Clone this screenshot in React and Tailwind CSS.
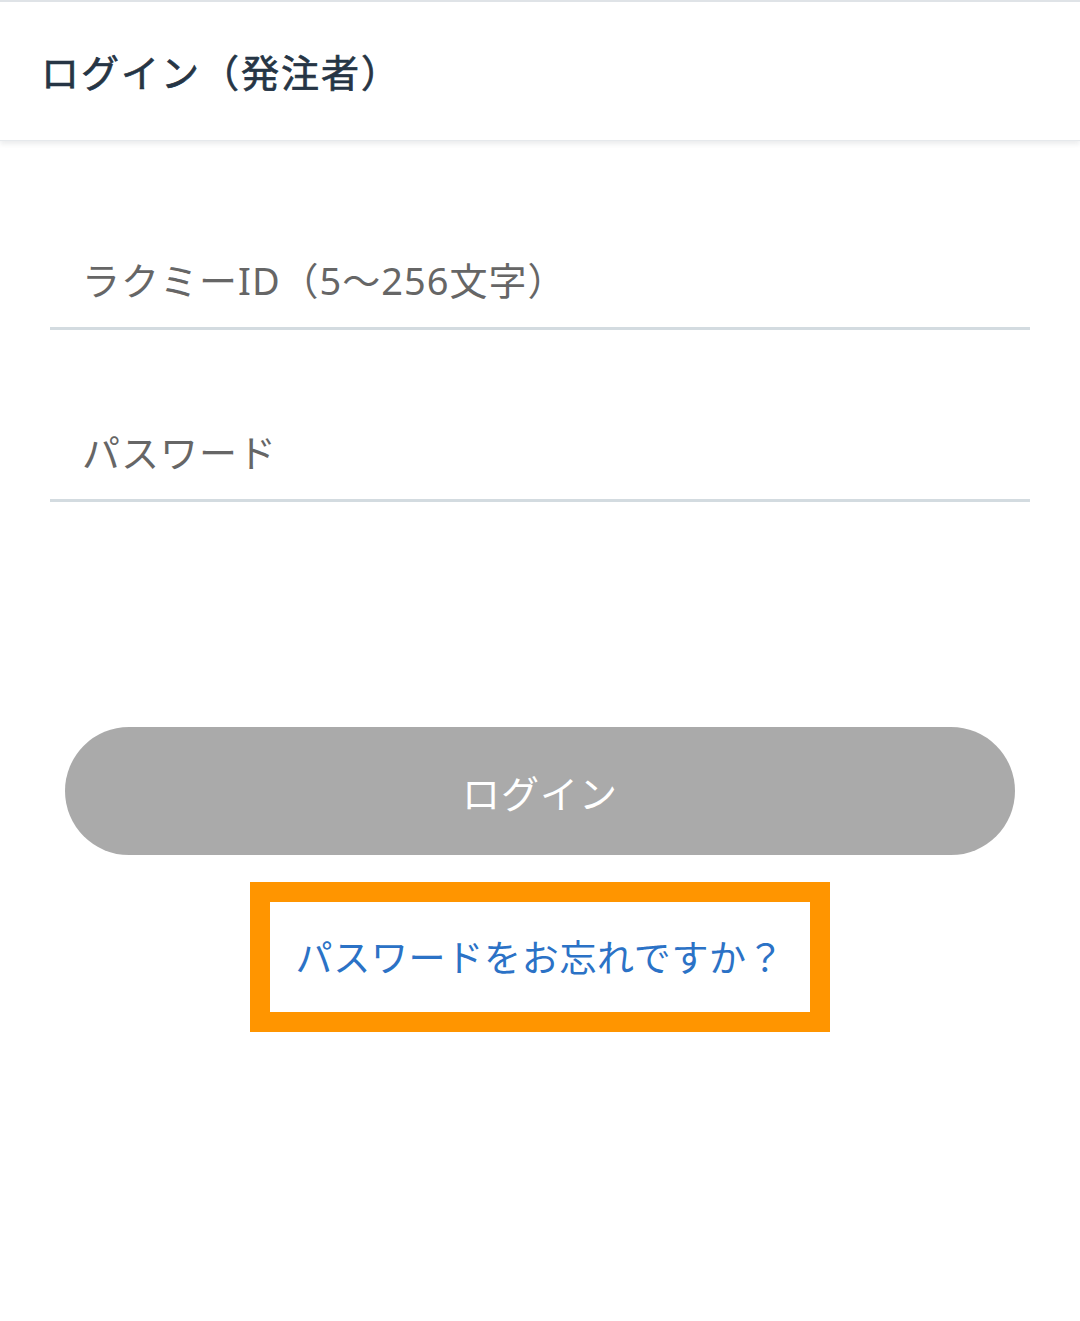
export default function App() {
  const jp = { fontFamily: '"Noto Sans CJK JP", "Noto Sans", sans-serif' };
  const mixed = { fontFamily: '"Noto Sans", "Noto Sans CJK JP", sans-serif' };

  return (
    <div className="min-h-screen bg-white" style={jp}>
      <header className="h-[141px] border-t-2 border-[#dfe3e7] bg-white flex items-center pl-[41px] shadow-[0_3px_5px_rgba(30,40,50,0.09)] border-b border-b-[#e6e9ec]">
        <h1 className="text-[38px] font-normal text-[#263545] tracking-[2px] leading-none [-webkit-text-stroke:0.7px_#263545]">ログイン（発注者）</h1>
      </header>

      <main className="px-[50px] pt-[97px]">
        <input
          type="text"
          placeholder="ラクミーID（5〜256文字）"
          style={mixed}
          className="block w-full h-[92px] pl-[32px] pb-[6px] text-[38px] tracking-[1px] text-[#444] placeholder:text-[#666] border-b-[3px] border-[#d3dbe0] outline-none"
        />
        <input
          type="password"
          placeholder="パスワード"
          style={mixed}
          className="block w-full h-[92px] mt-[80px] pl-[32px] pb-[6px] text-[38px] tracking-[1px] text-[#444] placeholder:text-[#666] border-b-[3px] border-[#d3dbe0] outline-none"
        />

        <button
          type="button"
          className="block mx-[15px] mt-[225px] w-[950px] h-[128px] rounded-full bg-[#aaaaaa] text-white text-[38px] tracking-[1px]"
        >
          ログイン
        </button>
      </main>

      <div className="flex justify-center mt-[27px]">
        <div className="w-[580px] h-[150px] border-[20px] border-[#ff9500] flex items-center justify-center">
          <a href="#" className="text-[37px] text-[#2b72c6] tracking-[0.7px]">
            パスワードをお忘れですか？
          </a>
        </div>
      </div>
    </div>
  );
}
